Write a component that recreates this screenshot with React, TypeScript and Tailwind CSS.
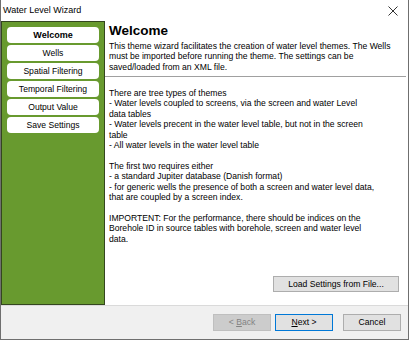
const STEPS = ['Welcome', 'Wells', 'Spatial Filtering', 'Temporal Filtering', 'Output Value', 'Save Settings']

const INTRO = [
  'This theme wizard facilitates the creation of water level themes. The Wells',
  'must be imported before running the theme. The settings can be',
  'saved/loaded from an XML file.',
]

const BODY = [
  'There are tree types of themes',
  '- Water levels coupled to screens, via the screen and water Level',
  'data tables',
  '- Water levels precent in the water level table, but not in the screen',
  'table',
  '- All water levels in the water level table',
  '',
  'The first two requires either',
  '- a standard Jupiter database (Danish format)',
  '- for generic wells the presence of both a screen and water level data,',
  'that are coupled by a screen index.',
  '',
  'IMPORTENT: For the performance, there should be indices on the',
  'Borehole ID in source tables with borehole, screen and water level',
  'data.',
]

function CloseIcon() {
  return (
    <svg width="10" height="10" viewBox="0 0 10 10" className="text-[#333]">
      <path d="M0.5 0.5 L9.5 9.5 M9.5 0.5 L0.5 9.5" stroke="currentColor" strokeWidth="1" fill="none" />
    </svg>
  )
}

function App() {
  return (
    <div className="w-[409px] h-[340px] bg-white border-x border-b border-[#6f6f6f] flex flex-col font-['Liberation_Sans',Arial,sans-serif] text-black overflow-hidden">
      {/* Title bar */}
      <div className="h-[21px] shrink-0 flex items-center justify-between pl-[2px] pr-[10px]">
        <span className="text-[9px] leading-none">Water Level Wizard</span>
        <CloseIcon />
      </div>

      {/* Main */}
      <div className="h-[284px] shrink-0 flex">
        {/* Step list */}
        <div className="w-[104px] shrink-0 bg-[#689a2f] border border-[#34461f] flex flex-col gap-[2px] pt-[5px] pl-[5px]">
          {STEPS.map((s, i) => (
            <div
              key={s}
              className={`w-[92px] h-[16px] rounded-[4px] bg-white flex items-center justify-center text-[8.6px] leading-none ${i === 0 ? 'font-bold text-[9px]' : ''}`}
            >
              {s}
            </div>
          ))}
        </div>

        {/* Content */}
        <div className="flex-1 flex flex-col">
          <div className="pl-[4px] pt-[3px]">
            <h1 className="text-[13.5px] font-bold leading-none">Welcome</h1>
            <div className="mt-[3px] text-[8.6px] leading-[10.75px] whitespace-nowrap">
              {INTRO.map((l, i) => (
                <div key={i}>{l}</div>
              ))}
            </div>
          </div>
          <div className="mt-[3px] mr-[2px] border-t border-[#a0a0a0] border-b border-b-white h-[2px]" />
          <div className="pl-[4px] pt-[10px] text-[8.6px] leading-[10.45px] whitespace-nowrap">
            {BODY.map((l, i) => (
              <div key={i} className="h-[10.45px]">{l}</div>
            ))}
          </div>
          <div className="flex-1" />
          <div className="flex justify-end pr-[9px] pb-[13px]">
            <button className="w-[126px] h-[16px] bg-[#e1e1e1] border border-[#adadad] text-[8.6px] leading-none">
              Load Settings from File...
            </button>
          </div>
        </div>
      </div>

      {/* Footer */}
      <div className="flex-1 bg-[#f0f0f0] border-t border-[#dadada] flex items-start justify-end pt-[8px] pr-[7px]">
        <button className="w-[58px] h-[17px] bg-[#cccccc] border border-[#bfbfbf] text-[#838383] text-[8.6px] leading-none">
          &lt; <span className="underline">B</span>ack
        </button>
        <button className="ml-[4px] w-[58px] h-[17px] bg-[#e1e1e1] border border-[#0078d7] text-[8.6px] leading-none">
          <span className="underline">N</span>ext &gt;
        </button>
        <button className="ml-[10px] w-[58px] h-[17px] bg-[#e1e1e1] border border-[#adadad] text-[8.6px] leading-none">
          Cancel
        </button>
      </div>
    </div>
  )
}

export default App
